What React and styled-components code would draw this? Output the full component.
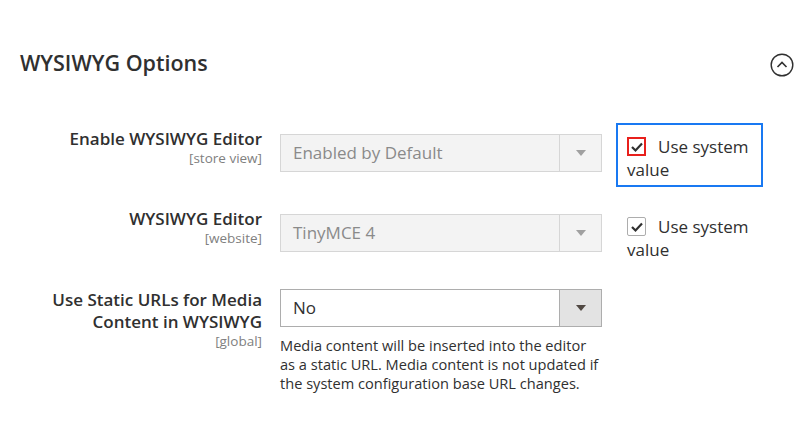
import React from "react";
import styled, { createGlobalStyle } from "styled-components";

const Global = createGlobalStyle`
  html, body { margin: 0; padding: 0; background: #fff; }
  body { font-family: "Open Sans", "Noto Sans", sans-serif; color: #303030; }
`;

const Section = styled.div`
  width: 800px;
  height: 445px;
  box-sizing: border-box;
  padding: 49px 6px 0 20px;
`;

const Header = styled.div`
  display: flex;
  align-items: center;
  justify-content: space-between;
  height: 28px;
  margin-bottom: 46px;
`;

const Title = styled.h2`
  margin: 0;
  font-size: 21.5px;
  line-height: 28px;
  font-weight: 600;
  color: #303030;
`;

const Collapse = styled.button`
  border: 0;
  background: none;
  padding: 0;
  width: 24px;
  height: 24px;
  margin-top: 4px;
  display: flex;
`;

const Row = styled.div`
  display: grid;
  grid-template-columns: 242px 322px 147px;
  column-gap: 18px;
  margin-bottom: ${(p) => p.$mb || 16}px;
  & > :nth-child(3) { margin-left: -4px; }
`;

const Label = styled.div`
  text-align: right;
  padding-top: ${(p) => p.$pt || 5}px;
`;

const LabelText = styled.div`
  font-size: 17px;
  line-height: 22px;
  font-weight: 600;
  color: #303030;
`;

const Scope = styled.div`
  font-size: 13.5px;
  line-height: 16px;
  color: #808080;
`;

const Control = styled.div`
  padding-top: 11px;
`;

const Select = styled.div`
  display: flex;
  height: 38px;
  box-sizing: border-box;
  border: 1px solid ${(p) => (p.$disabled ? "#d6d6d6" : "#adadad")};
  background: ${(p) => (p.$disabled ? "#f3f3f3" : "#fff")};
`;

const SelectValue = styled.div`
  flex: 1;
  padding-left: 12px;
  font-size: 17px;
  line-height: 36px;
  color: ${(p) => (p.$disabled ? "#8a8a8a" : "#303030")};
`;

const SelectButton = styled.div`
  width: 41px;
  border-left: 1px solid ${(p) => (p.$disabled ? "#d6d6d6" : "#adadad")};
  background: ${(p) => (p.$disabled ? "#f3f3f3" : "#e3e3e3")};
  display: flex;
  align-items: center;
  justify-content: center;
`;

const Arrow = styled.span`
  width: 0;
  height: 0;
  border-left: 5px solid transparent;
  border-right: 5px solid transparent;
  border-top: 6px solid ${(p) => (p.$disabled ? "#a0a0a0" : "#514943")};
`;

const Help = styled.div`
  margin-top: 9px;
  font-size: 14.6px;
  line-height: 19px;
  color: #303030;
`;

const UseDefault = styled.label`
  display: block;
  box-sizing: border-box;
  width: 147px;
  border: 2px solid ${(p) => (p.$focused ? "#1979f2" : "transparent")};
  padding: 10px 4px 4px 9px;
  font-size: 17px;
  line-height: 23px;
  color: #303030;
`;

const Box = styled.span`
  display: inline-block;
  position: relative;
  box-sizing: border-box;
  width: 19px;
  height: 19px;
  vertical-align: -3px;
  margin-right: 12px;
  border: ${(p) => (p.$focused ? "2px solid #e8201c" : "1px solid #adadad")};
  border-radius: ${(p) => (p.$focused ? "0" : "2px")};
  background: #fff;
  & > svg {
    position: absolute;
    left: 50%;
    top: 50%;
    transform: translate(-50%, -50%);
  }
`;

const Check = () => (
  <svg width="13" height="11" viewBox="0 0 13 11">
    <path d="M1.5 5.5 L5 9 L11.5 2" fill="none" stroke="#303030" strokeWidth="2.2" />
  </svg>
);

const SelectField = ({ value, disabled }) => (
  <Select $disabled={disabled}>
    <SelectValue $disabled={disabled}>{value}</SelectValue>
    <SelectButton $disabled={disabled}>
      <Arrow $disabled={disabled} />
    </SelectButton>
  </Select>
);

const Checkbox = ({ focused }) => (
  <UseDefault $focused={focused}>
    <Box $focused={focused}>
      <Check />
    </Box>
    Use system value
  </UseDefault>
);

export default function App() {
  return (
    <>
      <Global />
      <Section>
        <Header>
          <Title>WYSIWYG Options</Title>
          <Collapse aria-label="collapse">
            <svg width="24" height="24" viewBox="0 0 24 24">
              <circle cx="12" cy="12" r="10.8" fill="none" stroke="#303030" strokeWidth="1.4" />
              <path d="M7.5 14 L12 9.5 L16.5 14" fill="none" stroke="#303030" strokeWidth="1.6" />
            </svg>
          </Collapse>
        </Header>

        <Row>
          <Label>
            <LabelText>Enable WYSIWYG Editor</LabelText>
            <Scope>[store view]</Scope>
          </Label>
          <Control>
            <SelectField value="Enabled by Default" disabled />
          </Control>
          <Checkbox focused />
        </Row>

        <Row $mb={11}>
          <Label>
            <LabelText>WYSIWYG Editor</LabelText>
            <Scope>[website]</Scope>
          </Label>
          <Control>
            <SelectField value="TinyMCE 4" disabled />
          </Control>
          <Checkbox />
        </Row>

        <Row>
          <Label $pt={11}>
            <LabelText>Use Static URLs for Media Content in WYSIWYG</LabelText>
            <Scope>[global]</Scope>
          </Label>
          <Control>
            <SelectField value="No" />
            <Help>
              Media content will be inserted into the editor as a static URL. Media content is not
              updated if the system configuration base URL changes.
            </Help>
          </Control>
          <div />
        </Row>
      </Section>
    </>
  );
}
